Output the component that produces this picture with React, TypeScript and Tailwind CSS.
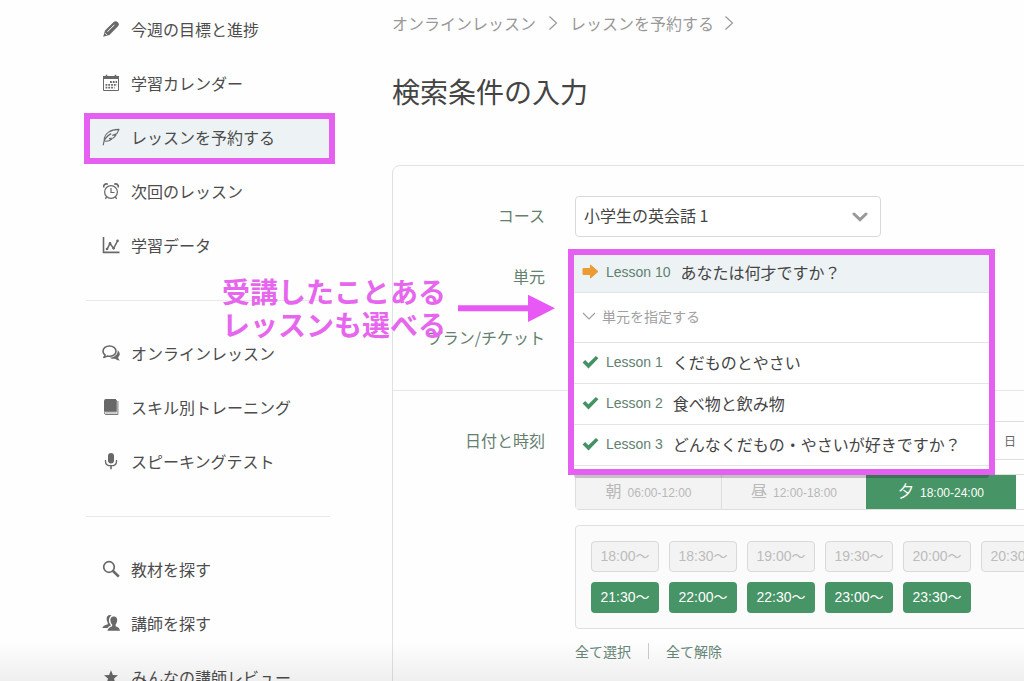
import type { ReactNode } from "react";

const Svg = ({ children }: { children: ReactNode }) => (
  <svg viewBox="0 0 18 18" className="w-[18px] h-[18px] shrink-0" fill="none" stroke="currentColor" aria-hidden="true">
    {children}
  </svg>
);

const PencilIcon = () => (
  <Svg>
    <path d="M1.2 16.8 3 10.6 11.4 2.2Q13.6.2 15.8 2.2T15.8 6.6L7.4 15Z" fill="currentColor" stroke="none" />
    <path d="M5.4 11.8 12.4 4.8" stroke="#fff" strokeWidth="1" />
    <path d="M3.2 13.2 4.8 14.8" stroke="#fff" strokeWidth="1" />
  </Svg>
);

const CalendarIcon = () => (
  <Svg>
    <path d="M1.5 2.5H16.5V16.5H1.5Z" strokeWidth="1" />
    <path d="M1 2H17V5H1Z" fill="currentColor" stroke="none" />
    <path d="M4.5 .8V3M13.5 .8V3" strokeWidth="1.6" />
    <path d="M8 8H15M3.5 10.8H15M3.5 13.6H12.5" strokeWidth="1.8" strokeDasharray="1.8 1" />
  </Svg>
);

const FeatherIcon = () => (
  <Svg>
    <path d="M1.2 17.2C1.6 12.5 4.4 8 9.2 5.6" strokeWidth="1.2" />
    <path d="M2.2 12.2C2.2 5.2 9 1.2 17 1.4 16 2.8 15.8 4.2 15 5.4L10.6 7.2 14 7C13.2 8.4 12.4 9.2 11.2 10L7.4 10.6 9.8 11.2C8 12.8 5.6 13.4 2.8 13.2" strokeWidth="1.1" strokeLinejoin="round" />
  </Svg>
);

const AlarmIcon = () => (
  <Svg>
    <circle cx="9" cy="10" r="6.4" strokeWidth="1.2" />
    <path d="M9 6V10.5H12.5" strokeWidth="1.2" />
    <path d="M1.7 5.5C1.3 2.8 3.3 1.3 5.8 2.2M16.3 5.5C16.7 2.8 14.7 1.3 12.2 2.2" strokeWidth="1.6" />
    <path d="M4.6 14.8 3.4 16.8M13.4 14.8 14.6 16.8" strokeWidth="1.3" />
  </Svg>
);

const ChartIcon = () => (
  <Svg>
    <path d="M1.5 1V16.4H17.5" strokeWidth="1.6" />
    <path d="M5 13.4 8 7.5 11.6 12.4 15.6 4.8" strokeWidth="1.5" />
    <g fill="currentColor" stroke="none">
      <circle cx="5" cy="13" r="1.3" />
      <circle cx="8" cy="7.4" r="1.3" />
      <circle cx="11.6" cy="12.2" r="1.3" />
      <circle cx="15.6" cy="4.8" r="1.3" />
    </g>
  </Svg>
);

const CommentsIcon = () => (
  <Svg>
    <path d="M7.5 2C11 2 14 4.2 14 7.2S11 12.3 7.5 12.3Q6.3 12.3 5.3 12 3.8 13.2 1.8 13.4 3 12 3.1 10.9 1 9.4 1 7.2C1 4.2 4 2 7.5 2Z" strokeWidth="1.6" strokeLinejoin="round" />
    <path d="M15.7 6.2C18.6 8.6 18.2 11.8 16.1 13.2 16.2 14.7 17.2 15.7 17.8 16.4 15.6 16.5 14.2 15.5 13.2 14.7 10.8 15.1 8.7 14.6 7.6 13.6 12.3 13.6 16 10.8 15.7 6.2Z" fill="currentColor" stroke="none" />
  </Svg>
);

const BookIcon = () => (
  <Svg>
    <path d="M4 1H14V13H4.6Q3 13 2 14V3Q2 1 4 1Z" fill="currentColor" stroke="none" />
    <path d="M15.9 3V16.5H4Q2.5 16.5 2.5 14.8 2.5 13.6 4 13.6H14.4V2" strokeWidth=".9" />
    <path d="M4 15H14.7" strokeWidth=".6" />
  </Svg>
);

const MicIcon = () => (
  <Svg>
    <rect x="6" y="1" width="6" height="10.4" rx="3" fill="currentColor" stroke="none" />
    <path d="M3.5 8V9.4C3.5 12.2 6 13.7 9 13.7S14.5 12.2 14.5 9.4V8" strokeWidth="1.3" />
    <path d="M9 13.7V17.2" strokeWidth="1.6" />
  </Svg>
);

const SearchIcon = () => (
  <Svg>
    <circle cx="7" cy="7" r="5.3" strokeWidth="1.7" />
    <path d="M10.8 10.8 16.8 16.6" strokeWidth="2.6" />
  </Svg>
);

const PeopleIcon = () => (
  <Svg>
    <g fill="currentColor" stroke="none">
      <path d="M9.5 1.2Q5 .2 4.6 4.6 4.7 7.4 5.8 9V10.2Q1 11.5.2 14H5.4Q6.5 12.5 9 11.6L7.2 8.5Q6 4.2 9.5 1.2Z" />
      <path d="M11.8 2.4C15 2.4 15.6 5 15 7.6Q14.6 9.5 13.6 10.6V12.2Q17.6 13.3 18 16.8H5.4Q6.2 13.3 10.2 12.2V10.6Q8.8 9.3 8.5 7.2C8.1 4.6 9 2.4 11.8 2.4Z" />
    </g>
  </Svg>
);

const StarIcon = () => (
  <Svg>
    <path d="M9 2.2 10.9 7.1 16 7.3 12 10.5 13.4 15.6 9 12.7 4.6 15.6 6 10.5 2 7.3 7.1 7.1Z" fill="currentColor" stroke="none" />
  </Svg>
);

const CrumbArrow = () => (
  <svg viewBox="0 0 10 16" className="w-[10px] h-4 shrink-0" fill="none" stroke="currentColor" aria-hidden="true">
    <path d="M1.5 1.5 8.5 8 1.5 14.5" strokeWidth="1.2" />
  </svg>
);

const menu: { label: string; icon: () => ReactNode; active?: boolean }[][] = [
  [
    { label: "今週の目標と進捗", icon: PencilIcon },
    { label: "学習カレンダー", icon: CalendarIcon },
    { label: "レッスンを予約する", icon: FeatherIcon, active: true },
    { label: "次回のレッスン", icon: AlarmIcon },
    { label: "学習データ", icon: ChartIcon },
  ],
  [
    { label: "オンラインレッスン", icon: CommentsIcon },
    { label: "スキル別トレーニング", icon: BookIcon },
    { label: "スピーキングテスト", icon: MicIcon },
  ],
  [
    { label: "教材を探す", icon: SearchIcon },
    { label: "講師を探す", icon: PeopleIcon },
    { label: "みんなの講師レビュー", icon: StarIcon },
  ],
];

const lessons = [
  { no: "Lesson 1", title: "くだものとやさい" },
  { no: "Lesson 2", title: "食べ物と飲み物" },
  { no: "Lesson 3", title: "どんなくだもの・やさいが好きですか？" },
];

const closedTimes = ["18:00〜", "18:30〜", "19:00〜", "19:30〜", "20:00〜", "20:30〜"];
const openTimes = ["21:30〜", "22:00〜", "22:30〜", "23:00〜", "23:30〜"];

function Sidebar() {
  return (
    <nav className="w-[244px] shrink-0 pt-[7px]">
      {menu.map((group, i) => (
        <ul
          key={i}
          className={`flex flex-col gap-[10px] ${i > 0 ? "mt-[33px] border-t border-[#e8eaea] pt-[30px]" : ""}`}
        >
          {group.map(({ label, icon: Icon, active }) => (
            <li key={label} className="relative">
              <a
                href="#"
                className={`flex h-11 items-center gap-[11px] pl-4 text-[#4c4c4c] whitespace-nowrap ${active ? "bg-[#edf3f5]" : ""}`}
              >
                <span className="text-[#686868]">
                  <Icon />
                </span>
                {label}
              </a>
              {active && (
                <div className="absolute -top-[2px] -left-[2px] -right-[5px] -bottom-[5px] border-[6px] border-[#e55ff0] pointer-events-none" />
              )}
            </li>
          ))}
        </ul>
      ))}
    </nav>
  );
}

function UnitMenu() {
  return (
    <div className="absolute z-10 -top-2 -left-[7px] w-[427px] h-[226px] border-[6px] border-[#e55ff0] bg-white">
      <ul>
        <li>
          <button className="flex w-full h-[38px] items-center border-b border-[#e0e6e5] bg-[#edf3f4] pl-2 pb-1 text-[#444] whitespace-nowrap">
            <svg viewBox="0 0 17 15" className="w-[17px] h-[15px] mr-[7px]" aria-hidden="true">
              <path d="M1 4.5H8.5V1L16 7.5 8.5 14V10.5H1Z" fill="#ec9b33" stroke="#ec9b33" strokeLinejoin="round" />
            </svg>
            <span className="text-sm text-[#5f8170] mr-[10px] font-['Liberation_Sans','Noto_Sans_CJK_JP',sans-serif]">Lesson 10</span>
            あなたは何才ですか？
          </button>
        </li>
        <li>
          <button className="flex w-full h-[50px] items-center border-b border-[#e4e4e4] pl-2 pb-1 text-sm text-[#a0a0a0]">
            <svg viewBox="0 0 14 10" className="w-[14px] h-[10px] mr-[6px]" fill="none" stroke="currentColor" aria-hidden="true">
              <path d="M1 2 7 8 13 2" strokeWidth="1.2" />
            </svg>
            単元を指定する
          </button>
        </li>
        {lessons.map((lesson) => (
          <li key={lesson.no}>
            <button className="flex w-full h-[41px] items-center border-b border-[#e4e4e4] pl-2 pb-[2px] text-[#444] whitespace-nowrap">
              <svg viewBox="0 0 17 14" className="w-[17px] h-[14px] mr-[7px]" aria-hidden="true">
                <path d="M.6 7.4 3.2 5 6.4 8.2 13.9 1 16.4 3.2 6.5 13.4Z" fill="#449164" />
              </svg>
              <span className="text-sm text-[#5f8170] mr-[10px] font-['Liberation_Sans','Noto_Sans_CJK_JP',sans-serif]">{lesson.no}</span>
              {lesson.title}
            </button>
          </li>
        ))}
      </ul>
      <div className="absolute -bottom-[9px] left-0 right-0 h-[3px] rounded-b bg-black/20" />
    </div>
  );
}

function TimePicker() {
  return (
    <div>
      <div className="flex h-[39px] items-center border border-[#ddd] rounded pl-[428px] text-xs text-[#666]">日</div>
      <div className="mt-[14px] flex h-9 border border-[#dedede] rounded font-['Liberation_Sans','Noto_Sans_CJK_JP',sans-serif]">
        <button disabled className="flex w-[146px] items-center justify-center gap-[6px] border-r border-[#dedede] bg-[#f3f3f3] text-[#b8b8b8]">
          朝<span className="pt-[2px] text-xs">06:00-12:00</span>
        </button>
        <button disabled className="flex w-[144px] items-center justify-center gap-[6px] bg-[#f3f3f3] text-[#b8b8b8]">
          昼<span className="pt-[2px] text-xs">12:00-18:00</span>
        </button>
        <button className="flex w-[150px] items-center justify-center gap-[6px] bg-[#479466] text-white">
          夕<span className="pt-[2px] text-xs">18:00-24:00</span>
        </button>
      </div>
      <div className="mt-[15px] border border-[#e0e0e0] rounded bg-[#fbfbfb] p-[15px] text-sm font-['Liberation_Sans','Noto_Sans_CJK_JP',sans-serif]">
        <div className="flex gap-[10px]">
          {closedTimes.map((time) => (
            <button key={time} disabled className="w-[68px] h-[31px] shrink-0 rounded border border-[#d9d9d9] bg-[#f3f3f3] pb-[2px] text-[#bcbcbc]">
              {time}
            </button>
          ))}
        </div>
        <div className="mt-[10px] flex gap-[10px]">
          {openTimes.map((time) => (
            <button key={time} className="w-[68px] h-[31px] shrink-0 rounded bg-[#479466] pb-[2px] text-white">
              {time}
            </button>
          ))}
        </div>
      </div>
      <div className="mt-3 flex items-center text-sm text-[#688778]">
        <button>全て選択</button>
        <span className="mx-[17px] h-4 w-px bg-[#ccc]" />
        <button>全て解除</button>
      </div>
    </div>
  );
}

export default function App() {
  return (
    <div className="relative flex h-screen overflow-hidden bg-[#fefefe] pl-[86px] text-base font-['Noto_Sans_CJK_JP',sans-serif]">
      <Sidebar />
      <main className="ml-[62px] grow min-w-[700px]">
        <div className="mt-[11px] flex items-center text-[#999]">
          <a href="#">オンラインレッスン</a>
          <span className="mx-3">
            <CrumbArrow />
          </span>
          <a href="#">レッスンを予約する</a>
          <span className="mx-[10px]">
            <CrumbArrow />
          </span>
        </div>
        <h1 className="mt-9 text-[28px] leading-10 text-[#444]">検索条件の入力</h1>
        <div className="mt-[54px] border border-[#dfe2e2] rounded-lg pb-20">
          <div className="grid grid-cols-[152px_1fr] gap-x-[30px] gap-y-5 pt-[30px] pb-[31px] items-center text-[#64806f]">
            <label htmlFor="course" className="pb-[3px] text-right">
              コース
            </label>
            <div className="relative w-[306px]">
              <select
                id="course"
                className="block w-full h-[41px] appearance-none rounded border border-[#d8dada] bg-white pl-2 pb-[3px] text-[#444]"
              >
                <option>小学生の英会話 1</option>
              </select>
              <svg viewBox="0 0 16 10" className="absolute right-[13px] top-4 w-4 h-[10px] pointer-events-none" aria-hidden="true">
                <path d="M2 2 8 7.6 14 2" fill="none" stroke="#999" strokeWidth="3" strokeLinecap="round" />
              </svg>
            </div>
            <span className="pb-[3px] text-right">単元</span>
            <div className="relative h-[41px]">
              <UnitMenu />
            </div>
            <span className="pb-[3px] text-right">プラン/チケット</span>
            <div className="h-[41px]" />
          </div>
          <div className="grid grid-cols-[152px_1fr] gap-x-[30px] border-t border-[#e6e8e8] pt-[30px]">
            <span className="pt-[7px] text-right text-[#64806f]">日付と時刻</span>
            <TimePicker />
          </div>
        </div>
      </main>

      <p className="absolute left-[222px] top-[275px] text-[28px] leading-[33px] font-bold text-[#e766ee] whitespace-nowrap">
        受講したことある
        <br />
        レッスンも選べる
      </p>
      <svg viewBox="0 0 98 28" className="absolute left-[458px] top-[294px] w-[98px] h-7" aria-hidden="true">
        <path d="M0 11.3H70V.7L97 14.3 70 28V17.3H0Z" fill="#e858f4" />
      </svg>
      <div className="absolute inset-x-0 bottom-0 h-10 bg-linear-to-b from-transparent to-black/6 pointer-events-none" />
    </div>
  );
}
